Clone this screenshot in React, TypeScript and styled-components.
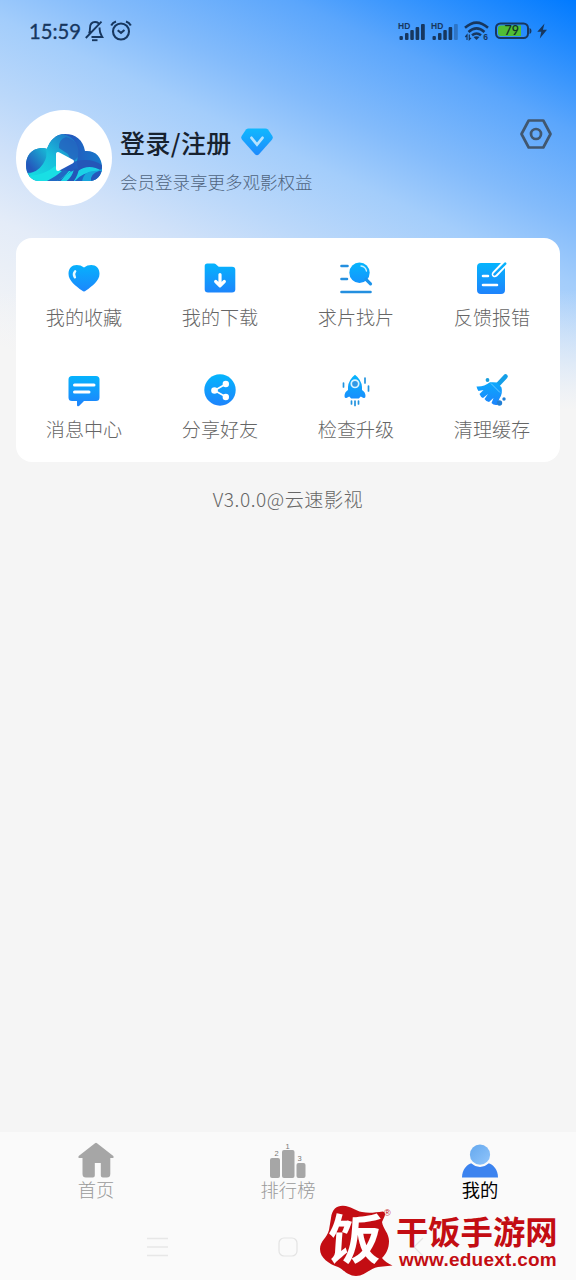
import React from "react";
import styled, { createGlobalStyle } from "styled-components";

const GlobalStyle = createGlobalStyle`
  * { box-sizing: border-box; }
  body {
    margin: 0;
    background: #f5f5f5;
    font-family: "Noto Sans CJK SC", sans-serif;
  }
  svg { display: block; overflow: visible; }
`;

const Screen = styled.main`
  position: relative;
  width: 576px;
  height: 1280px;
  display: flex;
  flex-direction: column;
  overflow: hidden;
  background:
    linear-gradient(180deg, rgba(245, 245, 245, 0) 290px, #f5f5f5 410px),
    linear-gradient(204.9deg, #007aff 0%, #5ba6fc 19%, #83bbfb 32%, #a3cdfb 41%, #bbd8fa 52%, #cfe1f9 60%, #e4ecf8 70%, #f5f5f5 88%) 0 0 / 576px 430px no-repeat,
    #f5f5f5;
`;

const StatusBar = styled.header`
  height: 61px;
  padding: 0 29px 0 29px;
  display: flex;
  align-items: center;
  justify-content: space-between;
  color: #17375f;
`;

const StatusGroup = styled.div<{ $gap: number }>`
  display: flex;
  align-items: center;
  gap: ${(p) => p.$gap}px;
`;

const Clock = styled.span`
  width: 51px;
  font: 400 20.3px/24px Lato, sans-serif;
  -webkit-text-stroke: 0.3px currentColor;
  white-space: nowrap;
`;

const Profile = styled.section`
  height: 177px;
  padding: 49px 24px 0 16px;
  display: flex;
  align-items: flex-start;
`;

const Avatar = styled.div`
  width: 96px;
  height: 96px;
  border-radius: 50%;
  background: #fff;
  display: flex;
  align-items: center;
  justify-content: center;
`;

const ProfileText = styled.div`
  flex: 1;
  padding: 14px 0 0 8px;
`;

const NameLine = styled.div`
  display: flex;
  align-items: center;
  gap: 9px;
  height: 36px;
`;

const Name = styled.h1`
  margin: 0;
  width: 112px;
  font-size: 25px;
  font-weight: 500;
  line-height: 36px;
  letter-spacing: 0.4px;
  white-space: nowrap;
  color: #17222f;
`;

const Hint = styled.p`
  margin: 9px 0 0;
  font-size: 17.5px;
  font-weight: 300;
  line-height: 26px;
  color: #4f647e;
`;

const Settings = styled.div`
  padding-top: 9px;
`;

const Card = styled.section`
  margin: 0 16px;
  height: 224px;
  border-radius: 16px;
  background: #fff;
  display: grid;
  grid-template-columns: repeat(4, 1fr);
  grid-template-rows: repeat(2, 112px);
`;

const Action = styled.div`
  display: flex;
  flex-direction: column;
  align-items: center;
  padding-top: 24px;
`;

const ActionLabel = styled.span`
  margin-top: 9px;
  font-size: 19.1px;
  font-weight: 300;
  line-height: 28px;
  color: #666;
`;

const Version = styled.p`
  margin: 23px 0 0;
  text-align: center;
  font-size: 19.1px;
  font-weight: 300;
  line-height: 28px;
  letter-spacing: 0.55px;
  color: #666;
`;

const Bottom = styled.footer`
  margin-top: auto;
  height: 148px;
  background: #fafafa;
`;

const Tabs = styled.nav`
  height: 82px;
  padding-top: 10px;
  display: grid;
  grid-template-columns: repeat(3, 1fr);
`;

const Tab = styled.div<{ $active?: boolean }>`
  display: flex;
  flex-direction: column;
  align-items: center;
  font-size: 18.3px;
  font-weight: ${(p) => (p.$active ? 400 : 300)};
  line-height: 22px;
  color: ${(p) => (p.$active ? "#000" : "#999")};
`;

const SystemKeys = styled.div`
  height: 66px;
  padding: 0 147px;
  display: flex;
  align-items: center;
  justify-content: space-between;
`;

const Watermark = styled.div`
  position: absolute;
  left: 318px;
  top: 1204px;
  display: flex;
  color: #c30d13;
`;

const Seal = styled.div`
  position: relative;
  width: 78px;
  height: 74px;
`;

const SealChar = styled.span`
  position: absolute;
  left: 10px;
  top: 4px;
  font-size: 54px;
  font-weight: 700;
  line-height: 56px;
  color: #fff;
  transform: skewX(-4deg);
`;

const Registered = styled.span`
  position: absolute;
  left: 66px;
  top: 4px;
  font: 9px/11px "Liberation Sans", sans-serif;
`;

const SiteText = styled.div`
  padding-top: 9px;
`;

const SiteName = styled.div`
  font-size: 32.3px;
  font-weight: 700;
  line-height: 35px;
  white-space: nowrap;
`;

const SiteUrl = styled.div`
  margin: 0 0 0 3px;
  font: 700 19px/24px "Liberation Sans", sans-serif;
  letter-spacing: 0.25px;
  white-space: nowrap;
`;

const B = "url(#blue)";

const IconDefs = () => (
  <svg width="0" height="0" style={{ position: "absolute" }}>
    <defs>
      <linearGradient id="blue" gradientUnits="userSpaceOnUse" x1="0" y1="1" x2="0" y2="32">
        <stop offset="0" stopColor="#05b4fd" />
        <stop offset="1" stopColor="#1e83fc" />
      </linearGradient>
    </defs>
  </svg>
);

const BellOff = () => (
  <svg width="20" height="22" viewBox="0 0 20 22" fill="none" stroke="currentColor" strokeWidth="1.9">
    <path d="M4 13.500C5 12 5 10 5 8c0-4 2-6 5-6 1.500 0 2.700.4 3.600 1.200M14.600 7.500V9c0 4 1.500 6 2.700 8H6.500M.8 18 16.500 1.700" />
    <path d="M7 20.200h5.500" />
  </svg>
);

const Alarm = () => (
  <svg width="22" height="21" viewBox="0 0 22 21" fill="none" stroke="currentColor" strokeWidth="2.1">
    <circle cx="11" cy="11.5" r="8" />
    <path d="m7.7 10.2 3.3 2.6 3.5-2.8M1.2 5.4Q2.7 2.5 6 1.4M20.8 5.4Q19.3 2.5 16 1.4" />
  </svg>
);

const Signal = ({ weak }: { weak?: boolean }) => (
  <svg width="28" height="20" viewBox="0 0 28 20" fill="currentColor">
    <text x="0" y="7.5" fontFamily="Liberation Sans, sans-serif" fontSize="8.5" fontWeight="700" textLength="12.5">HD</text>
    <rect x="1.5" y="15" width="3.4" height="4" rx="1" />
    <rect x="7" y="12" width="3.5" height="7" rx="1" />
    <rect x="12.3" y="9" width="3.5" height="10" rx="1" />
    <rect x="17.6" y="6" width="3.6" height="13" rx="1" />
    <rect x="23" y="3" width="3.8" height="16" rx="1" opacity={weak ? 0.35 : 1} />
  </svg>
);

const Wifi = () => (
  <svg width="26" height="20" viewBox="0 0 26 20" fill="none" stroke="currentColor" strokeWidth="2.5">
    <path d="M1 6.8Q12.5-3.6 24 6.8M4.5 11Q12.5 3.8 20.5 11M8 14.3Q12.5 10.6 17 14.3" />
    <path d="m9.5 16 3 3 3-3q-3-1.7-6 0Z" fill="currentColor" stroke="none" />
    <path d="M3 19v-5l-1.7 2M5.3 13.6v5L7 16.8" strokeWidth="1.2" />
    <text x="19.3" y="19.3" fontSize="8.5" fontWeight="700" fontFamily="Liberation Sans" fill="currentColor" stroke="none">6</text>
  </svg>
);

const Battery = () => (
  <svg width="37" height="18" viewBox="0 0 37 18">
    <rect x="1" y="1.5" width="32" height="14.6" rx="4.5" fill="none" stroke="currentColor" strokeWidth="2" />
    <path d="M6 3.5h20v10.600H6q-3 0-3-3V6.500q0-3 3-3Z" fill="#50bd35" />
    <path d="M34.500 6v6q2-.5 2-3t-2-3Z" fill="currentColor" />
    <text x="9.500" y="13.300" fontSize="12.500" fontFamily="Lato, sans-serif" fontWeight="600" textLength="14.500" fill="#0e322c">79</text>
  </svg>
);

const Bolt = () => (
  <svg width="10" height="16" viewBox="0 0 10 16">
    <path d="M7.500.500.300 8.800h4L2.800 15.500 10 6.800H5.900Z" fill="currentColor" />
  </svg>
);

const CloudLogo = () => (
  <svg width="76" height="48" viewBox="0 0 76 48">
    <defs>
      <linearGradient id="cloudBase" x1="0" y1="0" x2="1" y2="0">
        <stop offset="0" stopColor="#159bce" />
        <stop offset=".55" stopColor="#2556bd" />
        <stop offset="1" stopColor="#1679ca" />
      </linearGradient>
      <linearGradient id="cloudWave" x1="1" y1="0" x2="0" y2="1">
        <stop offset="0" stopColor="#2065c3" />
        <stop offset=".5" stopColor="#19bddb" />
        <stop offset="1" stopColor="#15e0e2" />
      </linearGradient>
      <linearGradient id="cloudLeft" x1="1" y1="0" x2="0" y2="1">
        <stop offset="0" stopColor="#16c5d9" />
        <stop offset=".8" stopColor="#2458bc" />
      </linearGradient>
      <clipPath id="cloudShape">
        <path d="M13 47C5 47 0 40 0 31c0-9 5-16 15-17 3 0 4 0 6 1C24 6 30 0 39 0c11 0 18 6 20 17 10-1 17 6 17 16 0 8-5 14-13 14Z" />
      </clipPath>
    </defs>
    <g clipPath="url(#cloudShape)">
      <rect width="76" height="48" fill="url(#cloudBase)" />
      <path d="M0 12h22v14q-5 12-22 13Z" fill="url(#cloudLeft)" />
      <path d="M20 14Q24 0 36 0q9 1 14 9 4 7 1 18l-19 4q-7 11-20 14L0 40q11-1 17-10 5-7 3-16Z" fill="url(#cloudWave)" />
      <path d="M40 3q14 4 14 18l-8 8-4-9-9-6q-1-8 7-11Z" fill="#2460be" opacity=".75" />
      <path d="M2 42q17-1 27-10l6 5h10Q36 46 27 48H3Z" fill="#19dfe4" />
      <path d="M19 48q12-6 18-12l6 1q-7 9-15 11Z" fill="#2169c3" />
      <path d="M34 48Q48 29 76 33v6q-17-4-28 9Z" fill="#1bd2e6" />
      <path d="M39 48q7-4 9-13l5-1q-1 8-6 14Z" fill="#2457b8" />
      <path d="M51 27q14-3 25 4v6q-13-8-24 0Z" fill="#2457b8" />
      <path d="M56 48c1-7 5-11 12-11q4 0 8-2v13Z" fill="#17a6dc" />
      <path d="M65 47q-1-7 8-10h3v10Z" fill="#2459bb" />
    </g>
    <path d="M32 20v15l14-7.500Z" fill="#fff" stroke="#fff" strokeWidth="4" strokeLinejoin="round" />
  </svg>
);

const VipGem = () => (
  <svg width="32" height="28" viewBox="0 0 32 28">
    <defs>
      <linearGradient id="gem" x1="0" y1="0" x2="0" y2="1">
        <stop offset="0" stopColor="#10b8fe" />
        <stop offset="1" stopColor="#1e8afd" />
      </linearGradient>
    </defs>
    <path d="M7.500.5h17q1.500 0 2.500 1l4.200 6.200q1.300 2-.3 4L17.800 26.500q-1.800 1.600-3.600 0L1.100 11.700q-1.600-2-.3-4L5 1.500q1-1 2.500-1Z" fill="url(#gem)" />
    <path d="m10.500 9.800 5.500 6.700 5.500-6.700" fill="none" stroke="#b4e2ff" strokeWidth="2.700" strokeLinecap="round" />
  </svg>
);

const HexSettings = () => (
  <svg width="32" height="30" viewBox="0 0 32 30" fill="none" stroke="#41576f" strokeWidth="2.700">
    <path d="M8.700 1.500h14.600L30.500 15l-7.200 13.500H8.700L1.500 15Z" strokeLinejoin="round" />
    <circle cx="16" cy="15" r="5" />
  </svg>
);

const Heart = () => (
  <>
    <path d="M16 29.500q-1 0-2-.9C8 24 .5 19 .5 11.700.5 6 4 3 8.700 3q4 0 7.300 2.400Q19.300 3 23.300 3C28 3 31.500 6 31.500 11.700 31.500 19 24 24 18 28.600q-1 .9-2 .9Z" fill={B} />
    <path d="M7.200 9.300q-2.400 2.700-.3 6" fill="none" stroke="#e7faff" strokeWidth="2.400" strokeLinecap="round" />
  </>
);

const Folder = () => (
  <>
    <path d="M.7 4Q.7 1.500 3.200 1.500h7q1.500 0 2.500 1.500l2 1.800H28q3.300 0 3.300 3v19.700q0 3-3.300 3H4q-3.300 0-3.300-3Z" fill={B} />
    <path d="M16 12.500v11M11.700 19.500l4.300 4.300 4.300-4.300" fill="none" stroke="#fff" strokeWidth="3.200" strokeLinecap="round" strokeLinejoin="round" />
  </>
);

const SearchList = () => (
  <>
    <circle cx="19.500" cy="10.800" r="10.200" fill={B} />
    <path d="m26 17.300 4.500 4.500" stroke="#1b93ea" strokeWidth="3.200" strokeLinecap="round" />
    <path d="M1.500 4h6M1.500 17h5.500M1.500 30h29" fill="none" stroke="#248fdf" strokeWidth="2.600" strokeLinecap="round" />
    <path d="M21 4q4.500.5 5.500 5" fill="none" stroke="#caf1ff" strokeWidth="1.300" strokeLinecap="round" />
  </>
);

const Edit = () => (
  <>
    <path d="M5 1h20l-8.500 9q-2 3 .8 5 2 1 4-.8L29 6v22q0 4-4 4H5q-4 0-4-4V5q0-4 4-4Z" fill={B} />
    <path d="m18.500 12.300 10.700-10.600" stroke={B} strokeWidth="2.600" strokeLinecap="round" />
    <path d="M7 14h5M7 23h14" stroke="#fff" strokeWidth="2.600" strokeLinecap="round" />
  </>
);

const Message = () => (
  <>
    <path d="M4 2h24q3.500 0 3.500 3.500v18q0 3.500-3.500 3.500H16l-5 5q-2 1-2-1v-4H4q-3.500 0-3.500-3.500v-18Q.5 2 4 2Z" fill={B} />
    <path d="M6.500 11h19.500M6.500 18h14.500" stroke="#fff" strokeWidth="3" strokeLinecap="round" />
  </>
);

const Share = () => (
  <>
    <circle cx="16" cy="16" r="15.700" fill={B} />
    <path d="M21.800 10 10.500 16.500l11.300 6.200" fill="none" stroke="#fff" strokeWidth="1.700" />
    <circle cx="10.500" cy="16.500" r="3.300" fill="#fff" />
    <circle cx="21.800" cy="10" r="3.200" fill="#fff" />
    <circle cx="21.800" cy="23" r="3.200" fill="#fff" />
  </>
);

const Rocket = () => (
  <>
    <path d="M15 .7q6.500 5 7 12.300v3q3.500 2 3.500 6 0 3-2.500 1.700l-2.200-1.200-2 2h-7.600l-2-2L7 23.700Q4.500 25 4.500 22q0-4 3.500-6v-3Q8.500 5.700 15 .7Z" fill={B} />
    <circle cx="15" cy="9.800" r="3.700" fill="#3098e5" stroke="#d9f3ff" strokeWidth="1.700" />
    <path d="M11.500 27v3M15 27v4.500M18.500 27v3M3.500 9v4M25 4v5M28.500 12v5" stroke="#2293df" strokeWidth="1.700" strokeLinecap="round" />
  </>
);

const Broom = () => (
  <>
    <path d="m22.500 10 7-7.500" stroke="#149fe8" strokeWidth="4.600" strokeLinecap="round" />
    <path d="M14 8.300q4-.3 7 .2l4.500 5q1.500 6-2 11l-2.500 6.500q-3.500.5-5.500-2l2-5-4.500 4q-3-.5-4.500-3l3.500-5-5 4q-2.500-1-3.500-4l4-4-5 1Q1 15 .5 12.500 8 13 14 8.300Z" fill={B} />
    <path d="m15 9.500 9 9" stroke="#82d4ff" strokeWidth=".8" />
    <circle cx="11.500" cy="6" r="1.900" fill="#179edc" />
    <circle cx="28" cy="25" r="1.700" fill="#217fd4" />
    <circle cx="23.500" cy="29" r="2.700" fill="#217fd4" />
  </>
);

const House = () => (
  <svg width="38" height="36" viewBox="0 0 38 36" fill="#a6a6a6">
    <path d="M18 1.200q1-.7 2 0L36.300 14q1 2-1 2h-2v16q0 3.500-3.500 3.500h-4q-2 0-2-2V21h-6v12.500q0 2-2 2H9q-3.500 0-3.500-3.500V16H2.700q-2 0-1-2Z" />
  </svg>
);

const Podium = () => (
  <svg width="38" height="36" viewBox="0 0 38 36" fill="#a6a6a6">
    <rect x="1" y="16" width="10" height="20" rx="2" />
    <rect x="13" y="8" width="12.500" height="28" rx="2" />
    <rect x="27.500" y="21" width="9" height="15" rx="2" />
    <g fontFamily="Liberation Sans, sans-serif" fontSize="7.500" textAnchor="middle" fill="#777">
      <text x="7.500" y="14">2</text>
      <text x="18.700" y="7">1</text>
      <text x="30.500" y="19">3</text>
    </g>
  </svg>
);

const Person = () => (
  <svg width="38" height="36" viewBox="0 0 38 36">
    <defs>
      <linearGradient id="head" x1="0" y1="0" x2="1" y2="1">
        <stop offset="0" stopColor="#64a8ee" />
        <stop offset="1" stopColor="#91c5fb" />
      </linearGradient>
    </defs>
    <path d="M1 35.500C1 28 5.500 22.500 11 21h16c5.500 1.500 10 7 10 14.500Z" fill="#3c83ef" />
    <circle cx="19" cy="12.700" r="12.200" fill="#fafafa" />
    <circle cx="19" cy="12.700" r="10.100" fill="url(#head)" />
  </svg>
);

const ACTIONS: { label: string; Glyph: React.FC }[] = [
  { label: "我的收藏", Glyph: Heart },
  { label: "我的下载", Glyph: Folder },
  { label: "求片找片", Glyph: SearchList },
  { label: "反馈报错", Glyph: Edit },
  { label: "消息中心", Glyph: Message },
  { label: "分享好友", Glyph: Share },
  { label: "检查升级", Glyph: Rocket },
  { label: "清理缓存", Glyph: Broom },
];

export default function App() {
  return (
    <Screen>
      <GlobalStyle />
      <IconDefs />
      <StatusBar>
        <StatusGroup $gap={5}>
          <Clock>15:59</Clock>
          <BellOff />
          <Alarm />
        </StatusGroup>
        <StatusGroup $gap={5}>
          <Signal />
          <Signal weak />
          <Wifi />
          <Battery />
          <Bolt />
        </StatusGroup>
      </StatusBar>

      <Profile>
        <Avatar><CloudLogo /></Avatar>
        <ProfileText>
          <NameLine>
            <Name>登录/注册</Name>
            <VipGem />
          </NameLine>
          <Hint>会员登录享更多观影权益</Hint>
        </ProfileText>
        <Settings><HexSettings /></Settings>
      </Profile>

      <Card>
        {ACTIONS.map(({ label, Glyph }) => (
          <Action key={label}>
            <svg width="32" height="32" viewBox="0 0 32 32"><Glyph /></svg>
            <ActionLabel>{label}</ActionLabel>
          </Action>
        ))}
      </Card>
      <Version>V3.0.0@云速影视</Version>

      <Bottom>
        <Tabs>
          <Tab><House />首页</Tab>
          <Tab><Podium />排行榜</Tab>
          <Tab $active><Person />我的</Tab>
        </Tabs>
        <SystemKeys>
          <svg width="21" height="20" viewBox="0 0 21 20" stroke="#e7e7e7" strokeWidth="1.700"><path d="M0 1.500h21M0 10h21M0 18.500h21" /></svg>
          <svg width="20" height="20" viewBox="0 0 20 20" fill="none" stroke="#e3e3e3" strokeWidth="1.200"><rect x="1" y="1" width="18" height="18" rx="5" /></svg>
          <svg width="21" height="20" viewBox="0 0 21 20" fill="none" stroke="#e3e3e3" strokeWidth="1.200"><path d="m15 1-9 9 9 9" /></svg>
        </SystemKeys>
      </Bottom>

      <Watermark>
        <Seal>
          <svg width="78" height="74" viewBox="0 0 78 74" fill="currentColor">
            <path d="M13 14C14 5 19 1.500 25 1.700c8 .3 12 5 19 6.300 7 1.500 13 .5 21-.5q3 1 1.500 5L64 18c1 7 7 11 7 19 0 8-3 13-7 17q4 5 10.500 7.500L60 63c-8 1-13 9-22 9-8 0-12-6-18-9C11 60 2 54 2 45c0-8 7-11 9-19q1-6 2-12Z" />
          </svg>
          <SealChar>饭</SealChar>
          <Registered>®</Registered>
        </Seal>
        <SiteText>
          <SiteName>干饭手游网</SiteName>
          <SiteUrl>www.eduext.com</SiteUrl>
        </SiteText>
      </Watermark>
    </Screen>
  );
}
